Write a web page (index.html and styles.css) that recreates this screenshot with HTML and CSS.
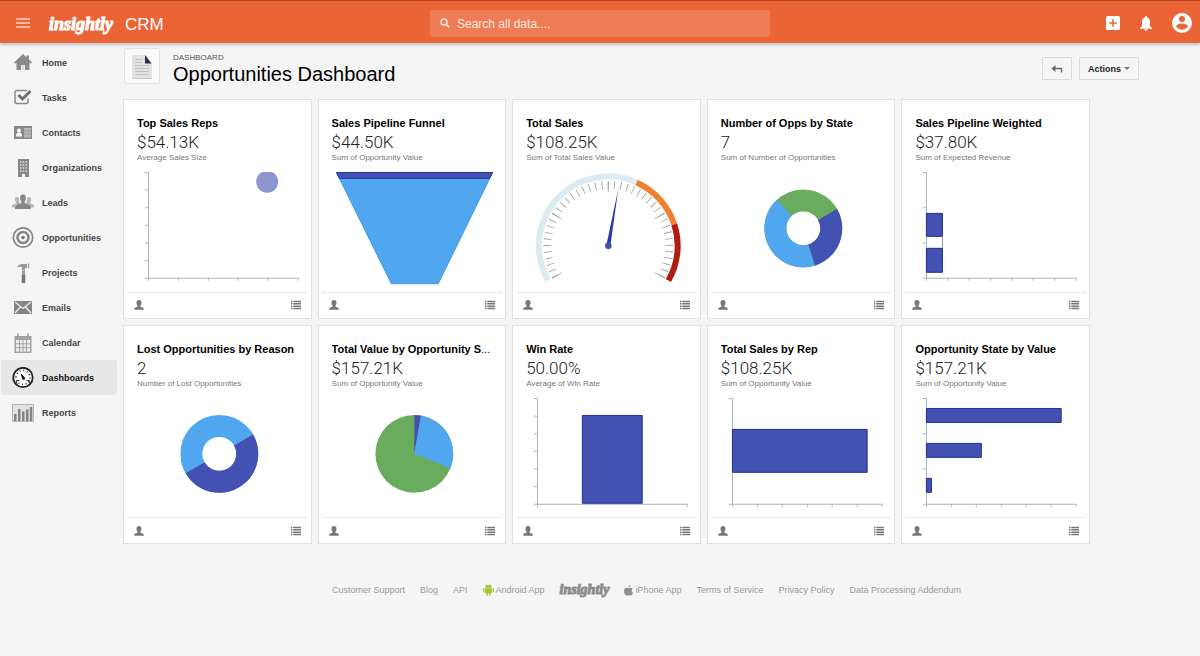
FILE: index.html
```html
<!DOCTYPE html>
<html lang="en">
<head>
<meta charset="utf-8">
<title>Opportunities Dashboard</title>
<link rel="stylesheet" href="styles.css">
</head>
<body>
<svg class="defs" aria-hidden="true">
  <symbol id="person" viewBox="0 0 10 10"><path d="M5 0C3.300 0 2.500 1.100 2.500 2.700c0 1.300.5 2.400 1.200 3v.9L.9 7.700C.3 8 .2 8.600.2 9.700h9.600c0-1.100-.1-1.700-.7-2L6.300 6.600v-.9c.7-.6 1.200-1.700 1.200-3C7.500 1.100 6.700 0 5 0z"/></symbol>
  <symbol id="list" viewBox="0 0 10 10"><path d="M0 .8h1.500v1.500H0zM2.300.8H10v1.500H2.300zM0 3.100h1.500v1.500H0zM2.300 3.100H10v1.500H2.300zM0 5.400h1.500v1.500H0zM2.300 5.400H10v1.500H2.300zM0 7.700h1.500v1.500H0zM2.300 7.700H10v1.500H2.300z"/></symbol>
</svg>

<header class="topbar">
  <div class="topbar-left">
    <button class="icon-btn" aria-label="Menu"><svg width="14" height="10" viewBox="0 0 14 10"><path d="M0 1h14M0 5h14M0 9h14" stroke="#ffd2c0" stroke-width="1.600"/></svg></button>
    <a class="logo" href="#">insightly</a>
    <span class="product">CRM</span>
  </div>
  <label class="search">
    <svg width="10" height="10" viewBox="0 0 10 10" aria-hidden="true"><circle cx="4" cy="4" r="3" fill="none" stroke="#ffe3d8" stroke-width="1.500"/><path d="M6.200 6.200L9.300 9.300" stroke="#ffe3d8" stroke-width="1.800"/></svg>
    <input type="text" placeholder="Search all data...." aria-label="Search all data">
  </label>
  <div class="topbar-right">
    <button class="icon-btn" aria-label="Add"><svg width="14" height="14" viewBox="0 0 14 14"><rect width="14" height="14" rx="1.500" fill="#fff"/><path d="M7 3.200v7.600M3.200 7h7.600" stroke="#ea6436" stroke-width="1.600"/></svg></button>
    <button class="icon-btn" aria-label="Notifications"><svg width="12" height="15" viewBox="0 0 12 15"><path d="M6 0a1 1 0 0 1 1 1v.6C9 2.100 10 3.800 10 6v4l2 2v.7H0V12l2-2V6c0-2.200 1-3.900 3-4.400V1a1 1 0 0 1 1-1zM4.500 13.300h3a1.500 1.500 0 0 1-3 0z" fill="#fff"/></svg></button>
    <button class="icon-btn" aria-label="Account"><svg width="20" height="20" viewBox="0 0 20 20"><circle cx="10" cy="10" r="10" fill="#fff"/><circle cx="10" cy="6" r="3" fill="#ea6436"/><path d="M4 13.500c0-2 4-3.100 6-3.100s6 1.100 6 3.100c-1.300 2-3.600 3.200-6 3.200s-4.700-1.200-6-3.200z" fill="#ea6436"/></svg></button>
  </div>
</header>

<div class="layout">
  <nav class="sidebar">
    <a href="#"><svg viewBox="0 0 22 22"><path d="M11 2L2 10.500l1.200 1.200L4.500 10.500V18H9v-5h4v5h4.500v-7.500l1.300 1.200L20 10.500l-3-2.900V3.500h-2.500v1.700z" fill="#8a8a8a"/><path d="M9.500 13h3v5h-3z" fill="#ddd"/></svg>Home</a>
    <a href="#"><svg viewBox="0 0 22 22"><path d="M15 3.500H5a2 2 0 0 0-2 2v9a2 2 0 0 0 2 2h9a2 2 0 0 0 2-2v-3" fill="none" stroke="#8a8a8a" stroke-width="1.500"/><path d="M6.500 8l4 4L18.500 4" fill="none" stroke="#707070" stroke-width="3"/></svg>Tasks</a>
    <a href="#"><svg viewBox="0 0 22 22"><path d="M2 4h18v13H2z" fill="#888"/><circle cx="7" cy="8.500" r="2" fill="#fff"/><path d="M4 14.500c0-3 1-4 3-4s3 1 3 4z" fill="#fff"/><path d="M12 6h7v9.500h-7z" fill="#b5b5b5"/><path d="M12 9h7M12 12h7" stroke="#999"/></svg>Contacts</a>
    <a href="#"><svg viewBox="0 0 22 22"><path d="M6 2h11v18h-4v-3h-3v3H6z" fill="#888"/><path d="M8 5h7M8 8h7M8 11h7M8 14h7" stroke="#ddd" stroke-width="1.500" stroke-dasharray="1.500 1.200"/></svg>Organizations</a>
    <a href="#"><svg viewBox="0 0 22 22"><path d="M5 5c-1.800 0-2.300 1.500-2 3.200.2 1 .6 1.700 1 2v1L1 12.500c-1 .4-1 1.500-1 3h22c0-1.500 0-2.600-1-3l-3-1.300v-1c.4-.3.8-1 1-2 .3-1.700-.2-3.200-2-3.200s-2.300 1.500-2 3.200L14 12H8L7 8.200C7.300 6.500 6.800 5 5 5z" fill="#b5b5b5"/><path d="M11 2.500C8.500 2.500 7.800 4.500 8.100 6.800c.2 1.300.6 2 1.200 2.600v1.800l-4 1.500c-1.500.6-2.300 2-2.300 4.300h16c0-2.300-.8-3.700-2.300-4.300l-4-1.500V9.400c.6-.6 1-1.300 1.200-2.600.3-2.300-.4-4.300-2.900-4.300z" fill="#888"/></svg>Leads</a>
    <a href="#"><svg viewBox="0 0 22 22"><g fill="none" stroke="#858585"><circle cx="11" cy="10.500" r="9.700" stroke-width="1.700"/><circle cx="11" cy="10.500" r="5.500" stroke-width="2.500"/></g><circle cx="11" cy="10.500" r="1.800" fill="#777"/></svg>Opportunities</a>
    <a href="#"><svg viewBox="0 0 22 22"><path d="M5 6c.5-3 3-4 5.500-4H15v4h-2v2h-3V5.200C8 4.500 6.500 4.500 5 6zM16 1.500h1.200v4.700H16zM10 8.500h3v4h-3z" fill="#999"/><path d="M9.700 12.500h3.600V21H9.700z" fill="#777"/></svg>Projects</a>
    <a href="#"><svg viewBox="0 0 22 22"><path d="M2 4h18v13H2z" fill="#858585"/><path d="M3 5l8 6.500L19 5M3 16l5.500-6M19 16l-5.500-6" fill="none" stroke="#eee" stroke-width="1.200"/></svg>Emails</a>
    <a href="#"><svg viewBox="0 0 22 22"><path d="M2.500 4h17v17h-17z" fill="#a3a3a3"/><path d="M6 1.500v4M16 1.500v4" stroke="#999" stroke-width="1.500"/><path d="M4 8h14v11.500H4z" fill="#eee"/><path d="M4 11.800h14M4 15.700h14M7.500 8v11.500M11 8v11.500M14.500 8v11.500" stroke="#a3a3a3"/></svg>Calendar</a>
    <a href="#" class="active"><svg viewBox="0 0 22 22"><circle cx="11" cy="10.500" r="9.700" fill="#fff" stroke="#222" stroke-width="1.800"/><circle cx="11" cy="10.500" r="7" fill="none" stroke="#333" stroke-width="1.700" stroke-dasharray="1 2.660"/><path d="M9.200 7.200l3 3.300-1.400 1.400z" fill="#111" stroke="#111"/><circle cx="11.500" cy="11.200" r="1.500" fill="#111"/><path d="M4.500 13.500h3M14.500 13.500h3" stroke="#333"/><path d="M6.200 18.500a2.500 3.500 0 0 1-1.500-4.500M15.800 18.500a2.500 3.500 0 0 0 1.500-4.500" fill="#fff" stroke="#222"/></svg>Dashboards</a>
    <a href="#"><svg viewBox="0 0 22 22"><path d="M.5 2.500h21v17H.5z" fill="#e2e2e2" stroke="#b5b5b5"/><path d="M2 12h2.500v7H2zM6 7h2.500v12H6zM10 9.500h2.500V19H10zM14 7.500h2.500V19H14zM17.800 5h2.500v14h-2.500z" fill="#858585"/></svg>Reports</a>
  </nav>

  <main class="main">
    <div class="page-head">
      <div class="page-icon"><svg width="20" height="25" viewBox="0 0 20 25"><path d="M0 1h13l7 8v16H0z" fill="#e2e2e2"/><path d="M0 24h20v1H0z" fill="#c8c8c8"/><path d="M3 5.500h7M3 8.500h7M3 11.500h14M3 14.500h14M3 17.500h14M3 20.500h14" stroke="#c2c2c2"/><path d="M13 1l6.500 8.500H13z" fill="#29304a"/></svg></div>
      <div class="page-title">
        <div class="crumb">DASHBOARD</div>
        <h1>Opportunities Dashboard</h1>
      </div>
      <div class="page-actions">
        <button class="btn" aria-label="Back"><svg width="12" height="8" viewBox="0 0 12 8"><path d="M1.500 3.500H10.500V7.500" fill="none" stroke="#666" stroke-width="1.400"/><path d="M4.500 0v7L.5 3.500z" fill="#666"/></svg></button>
        <button class="btn">Actions <svg width="6" height="3" viewBox="0 0 6 3"><path d="M0 0h6L3 3z" fill="#777"/></svg></button>
      </div>
    </div>

    <section class="grid">
      <article class="card">
        <div class="card-head"><h2>Top Sales Reps</h2><div class="value">$54.13K</div><div class="note">Average Sales Size</div></div>
        <svg class="chart" viewBox="0 0 187 124"><path class="axis" d="M24.500 4v109M21 110.500h153.500M21 4.500h3M21 22.200h3M21 39.800h3M21 57.500h3M21 75.200h3M21 92.800h3M54.500 110v3M84.500 110v3M114.500 110v3M144.500 110v3M174.500 110v3"/><path d="M138.500 4h10a11 11 0 1 1-10 0z" fill="#8d95cf"/></svg>
        <div class="card-foot"><svg><use href="#person"/></svg><svg><use href="#list"/></svg></div>
      </article>
      <article class="card">
        <div class="card-head"><h2>Sales Pipeline Funnel</h2><div class="value">$44.50K</div><div class="note">Sum of Opportunity Value</div></div>
        <svg class="chart" viewBox="0 0 187 124"><path d="M17.500 4.500H174L119.500 116H72.500z" fill="#50a7ef" stroke="#3e9aec"/><path d="M17.500 4.500H174L171 10.500H20.500z" fill="#4352b2" stroke="#2c3aa0"/></svg>
        <div class="card-foot"><svg><use href="#person"/></svg><svg><use href="#list"/></svg></div>
      </article>
      <article class="card">
        <div class="card-head"><h2>Total Sales</h2><div class="value">$108.25K</div><div class="note">Sum of Total Sales Value</div></div>
        <svg class="chart" viewBox="0 0 187 124">
          <g transform="translate(95.500 78)" fill="none">
            <path d="M-60.200 34.800A69.500 69.500 0 0 1 28.300 -63.500" stroke="#dceaf3" stroke-width="6"/>
            <path d="M28.300 -63.500A69.500 69.500 0 0 1 66.100 -21.500" stroke="#ee8130" stroke-width="6"/>
            <path d="M66.100 -21.500A69.500 69.500 0 0 1 60.200 34.800" stroke="#b01c12" stroke-width="6"/>
            <path d="M-53 30.600A61.200 61.200 0 1 1 53.400 30.200" pathLength="240.700" stroke="#a0a0a0" stroke-width="8" stroke-dasharray=".8 5.200"/>
            <path d="M-56.300 32.500l9.500-5.500M-56.300-32.500l9.500 5.500M0-65v11M56.300-32.500l-9.500 5.500M56.300 32.500l-9.500-5.500" stroke="#999" stroke-width=".8"/>
            <path d="M10-57L2 .4-2-.4z" fill="#2b3aa8"/><circle r="3.300" fill="#4352b2"/>
          </g>
        </svg>
        <div class="card-foot"><svg><use href="#person"/></svg><svg><use href="#list"/></svg></div>
      </article>
      <article class="card">
        <div class="card-head"><h2>Number of Opps by State</h2><div class="value">7</div><div class="note">Sum of Number of Opportunities</div></div>
        <svg class="chart" viewBox="0 0 187 124">
          <g fill="none" stroke-width="22">
            <circle cx="95.500" cy="60.500" r="28" pathLength="360" stroke="#6aac5d"/>
            <circle cx="95.500" cy="60.500" r="28" pathLength="360" stroke="#4352b2" stroke-dasharray="103 257" transform="rotate(-30 95.500 60.500)"/>
            <circle cx="95.500" cy="60.500" r="28" pathLength="360" stroke="#50a7ef" stroke-dasharray="154.300 205.700" transform="rotate(72.900 95.500 60.500)"/>
          </g>
        </svg>
        <div class="card-foot"><svg><use href="#person"/></svg><svg><use href="#list"/></svg></div>
      </article>
      <article class="card">
        <div class="card-head"><h2>Sales Pipeline Weighted</h2><div class="value">$37.80K</div><div class="note">Sum of Expected Revenue</div></div>
        <svg class="chart" viewBox="0 0 187 124"><path class="axis" d="M24.500 4v109M21 110.500h153.500M21 4.500h3M21 39.800h3M21 75.200h3M46 110v3M67.400 110v3M88.800 110v3M110.200 110v3M131.600 110v3M153 110v3M174.500 110v3"/><path d="M40.500 69v12" stroke="#8c8fa0"/><path class="bar" d="M24.500 45.500h16v23h-16zM24.500 80.500h16v24h-16z"/></svg>
        <div class="card-foot"><svg><use href="#person"/></svg><svg><use href="#list"/></svg></div>
      </article>
      <article class="card">
        <div class="card-head"><h2>Lost Opportunities by Reason</h2><div class="value">2</div><div class="note">Number of Lost Opportunities</div></div>
        <svg class="chart" viewBox="0 0 187 124">
          <g fill="none" stroke-width="22">
            <circle cx="95.500" cy="60" r="28" stroke="#50a7ef"/>
            <circle cx="95.500" cy="60" r="28" pathLength="360" stroke="#4352b2" stroke-dasharray="180 180" transform="rotate(-30 95.500 60)"/>
          </g>
        </svg>
        <div class="card-foot"><svg><use href="#person"/></svg><svg><use href="#list"/></svg></div>
      </article>
      <article class="card">
        <div class="card-head"><h2>Total Value by Opportunity S<span class="more">...</span></h2><div class="value">$157.21K</div><div class="note">Sum of Opportunity Value</div></div>
        <svg class="chart" viewBox="0 0 187 124"><circle cx="95.500" cy="60" r="39" fill="#6aac5d"/><path d="M95.500 60V21A39 39 0 0 1 102.300 21.600z" fill="#4352b2"/><path d="M95.500 60L102.300 21.600A39 39 0 0 1 131.800 74.300z" fill="#50a7ef"/></svg>
        <div class="card-foot"><svg><use href="#person"/></svg><svg><use href="#list"/></svg></div>
      </article>
      <article class="card">
        <div class="card-head"><h2>Win Rate</h2><div class="value">50.00%</div><div class="note">Average of Win Rate</div></div>
        <svg class="chart" viewBox="0 0 187 124"><path class="axis" d="M24.500 4v109M21 110.500h153.500M21 4.500h3M21 22.200h3M21 39.800h3M21 57.500h3M21 75.200h3M21 92.800h3M174.500 110v3"/><path class="bar" d="M69.500 21.500h60v88h-60z"/></svg>
        <div class="card-foot"><svg><use href="#person"/></svg><svg><use href="#list"/></svg></div>
      </article>
      <article class="card">
        <div class="card-head"><h2>Total Sales by Rep</h2><div class="value">$108.25K</div><div class="note">Sum of Opportunity Value</div></div>
        <svg class="chart" viewBox="0 0 187 124"><path class="axis" d="M24.500 4v109M21 110.500h153.500M21 4.500h3M49.500 110v3M74.500 110v3M99.500 110v3M124.500 110v3M149.500 110v3M174.500 110v3"/><path class="bar" d="M24.500 35.500h135v43h-135z"/></svg>
        <div class="card-foot"><svg><use href="#person"/></svg><svg><use href="#list"/></svg></div>
      </article>
      <article class="card">
        <div class="card-head"><h2>Opportunity State by Value</h2><div class="value">$157.21K</div><div class="note">Sum of Opportunity Value</div></div>
        <svg class="chart" viewBox="0 0 187 124"><path class="axis" d="M24.500 4v109M21 110.500h153.500M21 4.500h3M21 39.800h3M21 75.200h3M49.500 110v3M74.500 110v3M99.500 110v3M124.500 110v3M149.500 110v3M174.500 110v3"/><path class="bar" d="M24.500 14.500h135v14h-135zM24.500 49.500h55v14h-55zM24.500 84.500h5v14h-5z"/></svg>
        <div class="card-foot"><svg><use href="#person"/></svg><svg><use href="#list"/></svg></div>
      </article>
    </section>

    <footer class="footer">
      <a href="#">Customer Support</a>
      <a href="#">Blog</a>
      <a href="#">API</a>
      <a href="#"><svg width="11" height="12" viewBox="0 0 11 12" fill="#a4c639"><path d="M2 4.200h7v4.600a.7.700 0 0 1-.7.700H7.500v1.800a.7.700 0 0 1-1.400 0V9.500H4.900v1.800a.7.700 0 0 1-1.400 0V9.500H2.700a.7.700 0 0 1-.7-.7zM0 4.800a.7.700 0 0 1 1.400 0v3a.7.700 0 0 1-1.400 0zM9.600 4.800a.7.700 0 0 1 1.400 0v3a.7.700 0 0 1-1.400 0zM2 3.800C2 2.500 2.700 1.800 3.500 1.300L2.700.2 3 0l.9 1.100a4 4 0 0 1 3.200 0L8 0l.3.2-.8 1.100C8.300 1.800 9 2.500 9 3.800z"/></svg>Android App</a>
      <a class="logo" href="#">insightly</a>
      <a href="#"><svg width="9" height="11" viewBox="0 0 9 11" fill="#8f8f8f"><path d="M6.500 0c.1 1.200-.9 2.300-2 2.300C4.400 1.200 5.400.1 6.500 0zM8.600 3.700c-1.500.9-1.300 3 .3 3.700C8.400 8.900 7.500 10.600 6.500 10.600c-.7 0-1-.4-1.800-.4s-1.100.4-1.800.4C1.600 10.700 0 8 0 5.900 0 3.900 1.300 2.700 2.700 2.700c.8 0 1.400.5 1.900.5s1.300-.6 2.300-.5c.7 0 1.300.4 1.700 1z"/></svg>iPhone App</a>
      <a href="#">Terms of Service</a>
      <a href="#">Privacy Policy</a>
      <a href="#">Data Processing Addendum</a>
    </footer>
  </main>
</div>
</body>
</html>
```
FILE: styles.css
```css
* { box-sizing: border-box; }
body {
  margin: 0;
  min-height: 100vh;
  background: #f5f5f5;
  font-family: "Liberation Sans", Arial, sans-serif;
  color: #111;
}
a { color: inherit; text-decoration: none; }
h1, h2 { margin: 0; }
button { font: inherit; cursor: pointer; }
.defs { display: none; }

.topbar {
  display: grid;
  grid-template-columns: 1fr 340px 1fr;
  align-items: center;
  height: 43px;
  padding: 2px 8px 0;
  background: #ea6436;
  border-top: 1px solid #b5431f;
  box-shadow: 0 1px 4px rgba(40, 60, 70, .4);
}
.topbar-left, .topbar-right { display: flex; align-items: center; }
.topbar-left { padding-left: 8px; }
.topbar-right { justify-content: flex-end; gap: 20px; }
.icon-btn { display: flex; padding: 0; border: 0; background: none; }
.logo {
  font-family: "Liberation Serif", serif;
  font-style: italic;
  font-weight: 700;
  line-height: 24px;
}
.topbar .logo { margin-left: 19px; padding-top: 2px; font-size: 18px; color: #fff; -webkit-text-stroke: 1px #fff; }
.product { margin-left: 12px; padding-top: 3px; font-size: 17px; line-height: 24px; color: #fff; }
.search {
  display: flex;
  align-items: center;
  gap: 7px;
  height: 27px;
  padding: 0 10px;
  background: #ee7c55;
  border-radius: 2px;
}
.search input {
  flex: 1;
  min-width: 0;
  padding: 2px 0 0;
  border: 0;
  outline: 0;
  background: none;
  font: 12px "Liberation Sans", Arial, sans-serif;
  color: #fff;
}
.search input::placeholder { color: #ffe9e0; opacity: 1; }

.layout { display: flex; }
.sidebar { flex: 0 0 117px; padding: 2px 0 0 1px; }
.sidebar a {
  display: flex;
  align-items: center;
  gap: 8px;
  height: 35px;
  padding-left: 11px;
  border-radius: 3px;
  font-size: 9px;
  font-weight: 700;
  color: #444;
}
.sidebar svg { width: 22px; height: 22px; }
.sidebar .active { background: #e7e7e7; color: #111; }

.main { flex: 1; min-width: 0; padding: 5px 110px 0 6px; }
.page-head { display: flex; align-items: flex-start; }
.page-icon {
  display: flex;
  align-items: center;
  justify-content: center;
  width: 36px;
  height: 36px;
  margin-left: 1px;
  background: #fafafa;
  border: 1px solid #e2e2e2;
  border-radius: 2px;
}
.page-title { padding: 5px 0 0 13px; }
.crumb { font-size: 8px; line-height: 9px; color: #555; }
h1 { font-size: 20px; font-weight: 400; line-height: 24px; color: #000; }
.page-actions { display: flex; gap: 7px; margin: 9px -49px 0 auto; }
.btn {
  display: flex;
  align-items: center;
  gap: 3px;
  height: 23px;
  padding: 0 8px;
  border: 1px solid #dadada;
  border-radius: 1px;
  background: #f5f5f5;
  font-size: 9px;
  font-weight: 700;
  color: #222;
}

.grid { display: grid; grid-template-columns: repeat(5, 1fr); gap: 6px; margin-top: 13px; }
.card { min-width: 0; background: #fff; border: 1px solid #e0e0e0; }
.card-head { padding: 15px 13px 4px; }
h2 {
  overflow: hidden;
  white-space: nowrap;
  font-size: 11px;
  line-height: 17px;
  color: #000;
}
.more { font-weight: 400; }
.value { font-family: Roboto, sans-serif; font-weight: 300; font-size: 17px; line-height: 20px; color: #222; }
.note { font-size: 8px; line-height: 12px; color: #777; }
.chart { display: block; width: 100%; }
.axis { fill: none; stroke: #a9b7bf; stroke-width: 1; }
.bar { fill: #4352b2; stroke: #1f2d99; stroke-width: 1; }
.card-foot {
  display: flex;
  justify-content: space-between;
  align-items: center;
  height: 26px;
  margin: 0 3px;
  padding: 0 7px;
  border-top: 1px solid #e8e8e8;
}
.card-foot svg { width: 10px; height: 10px; fill: #777; }

.footer {
  display: flex;
  justify-content: center;
  align-items: center;
  gap: 15px;
  margin: 34px -80px 0 0;
  font-size: 9px;
  color: #999;
  white-space: nowrap;
}
.footer a { display: flex; align-items: center; gap: 2px; }
.footer .logo { font-size: 14px; color: #8c8c8c; -webkit-text-stroke: 1px #8c8c8c; }
```
